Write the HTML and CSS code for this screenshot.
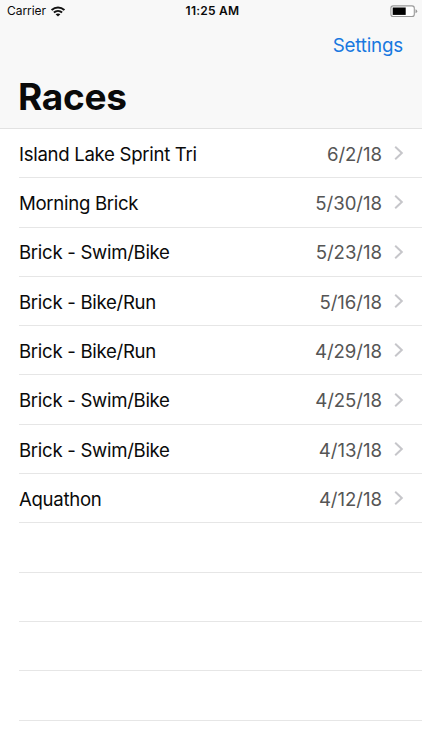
FILE: index.html
```html
<!DOCTYPE html>
<html lang="en">
<head>
<meta charset="utf-8">
<title>Races</title>
<link rel="stylesheet" href="styles.css">
</head>
<body>
<header class="header">
  <div class="status">
    <div class="carrier"><span>Carrier</span>
      <svg class="wifi" viewBox="0 0 14 11" width="14" height="11"><path d="M.6 4.1C4.3.6 9.7.6 13.4 4.1M2.9 6.5c2.4-2.1 5.8-2.1 8.2 0" fill="none" stroke="#111" stroke-width="2"/><path d="M4.6 8.2c1.4-1.1 3.4-1.1 4.8 0L7 10.6z" fill="#111"/></svg>
    </div>
    <span class="time">11:25 AM</span>
    <svg class="battery" viewBox="0 0 28 13" width="28" height="13"><rect x=".9" y=".9" width="23.4" height="10.6" rx="2.3" fill="#fff" stroke="#999" stroke-width="1.1"/><rect x="2.7" y="2.5" width="13" height="7.4" fill="#000"/><path d="M25.5 4.2q1.7.5 1.7 2t-1.7 2z" fill="#999"/></svg>
  </div>
  <nav class="nav"><a class="settings">Settings</a></nav>
  <h1 class="title">Races</h1>
</header>
<main class="list">
  <div class="row"><span class="name">Island Lake Sprint Tri</span><span class="date">6/2/18</span><svg class="chevron" viewBox="0 0 10 16"><path d="M1.2 1.8 7.8 8l-6.6 6.2"/></svg></div>
  <div class="row"><span class="name">Morning Brick</span><span class="date">5/30/18</span><svg class="chevron" viewBox="0 0 10 16"><path d="M1.2 1.8 7.8 8l-6.6 6.2"/></svg></div>
  <div class="row"><span class="name">Brick - Swim/Bike</span><span class="date">5/23/18</span><svg class="chevron" viewBox="0 0 10 16"><path d="M1.2 1.8 7.8 8l-6.6 6.2"/></svg></div>
  <div class="row"><span class="name">Brick - Bike/Run</span><span class="date">5/16/18</span><svg class="chevron" viewBox="0 0 10 16"><path d="M1.2 1.8 7.8 8l-6.6 6.2"/></svg></div>
  <div class="row"><span class="name">Brick - Bike/Run</span><span class="date">4/29/18</span><svg class="chevron" viewBox="0 0 10 16"><path d="M1.2 1.8 7.8 8l-6.6 6.2"/></svg></div>
  <div class="row"><span class="name">Brick - Swim/Bike</span><span class="date">4/25/18</span><svg class="chevron" viewBox="0 0 10 16"><path d="M1.2 1.8 7.8 8l-6.6 6.2"/></svg></div>
  <div class="row"><span class="name">Brick - Swim/Bike</span><span class="date">4/13/18</span><svg class="chevron" viewBox="0 0 10 16"><path d="M1.2 1.8 7.8 8l-6.6 6.2"/></svg></div>
  <div class="row"><span class="name">Aquathon</span><span class="date">4/12/18</span><svg class="chevron" viewBox="0 0 10 16"><path d="M1.2 1.8 7.8 8l-6.6 6.2"/></svg></div>
  <div class="row"></div>
  <div class="row"></div>
  <div class="row"></div>
  <div class="row"></div>
</main>
</body>
</html>
```
FILE: styles.css
```css
* { box-sizing: border-box; }
body {
  margin: 0;
  height: 750px;
  overflow: hidden;
  background: #fff;
  color: #0a0a0a;
  font-family: Inter, "Liberation Sans", sans-serif;
}
.header {
  height: 129px;
  background: #f8f8f8;
  border-bottom: 1px solid #e2e2e2;
}
.status {
  display: grid;
  grid-template-columns: 1fr auto 1fr;
  align-items: center;
  height: 22px;
  padding: 0 4px 0 7px;
  font-size: 12px;
  line-height: 22px;
}
.carrier { display: flex; align-items: center; gap: 5px; letter-spacing: -0.05px; }
.wifi { display: block; }
.time { font-weight: 600; letter-spacing: 0.25px; }
.battery { display: block; justify-self: end; }
.nav {
  display: flex;
  justify-content: flex-end;
  height: 46px;
  padding-right: 19px;
  font-size: 18.8px;
  line-height: 47px;
}
.settings { color: #1878e0; letter-spacing: -0.2px; }
.title {
  margin: 0;
  padding-left: 18px;
  font-size: 37px;
  line-height: 58px;
  font-weight: 700;
  letter-spacing: -0.3px;
}
.list { padding-left: 19px; }
.row {
  display: flex;
  align-items: center;
  height: 49.3px;
  border-bottom: 1px solid #e6e6e6;
  padding-right: 18px;
  font-size: 18.6px;
}
.name { flex: 1; padding-top: 1.4px; letter-spacing: -0.3px; }
.date { padding-top: 1.4px; color: #555; letter-spacing: -0.04px; }
.chevron { width: 10px; height: 16px; margin-left: 12px; }
.chevron path { fill: none; stroke: #c6c6ca; stroke-width: 2; }
```
